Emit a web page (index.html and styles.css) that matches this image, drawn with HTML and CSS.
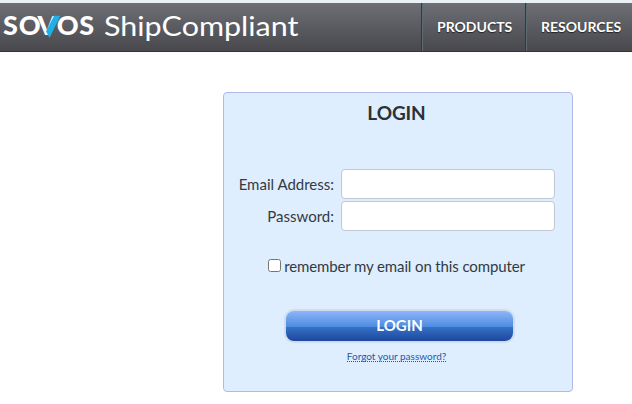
FILE: index.html
```html
<!DOCTYPE html>
<html lang="en">
<head>
    <meta charset="UTF-8">
    <meta name="viewport" content="width=device-width, initial-scale=1.0">
    <title>Sovos ShipCompliant Login</title>
    <link rel="stylesheet" href="styles.css">
</head>
<body>
    <header class="header">
        <a class="logo" href="#">
            <svg width="300" height="48" viewBox="0 0 300 48">
                <text class="logo-sovos" x="3 18.8 37.6 56.8 79.2" y="32.4">SOVOS</text>
                <polygon points="54,12.8 60.3,12.8 49.6,34.8 46,28.5" fill="#1fb0e6"/>
                <text class="logo-ship" x="104" y="32.6" textLength="194.5" lengthAdjust="spacingAndGlyphs">ShipCompliant</text>
            </svg>
        </a>
        <nav class="nav">
            <a class="products" href="#">PRODUCTS</a>
            <a class="resources" href="#">RESOURCES</a>
        </nav>
    </header>

    <form class="login-box">
        <h1>LOGIN</h1>
        <div class="row">
            <label for="email">Email Address:</label>
            <input type="text" id="email">
        </div>
        <div class="row">
            <label for="password">Password:</label>
            <input type="password" id="password">
        </div>
        <div class="remember">
            <input type="checkbox" id="remember">
            <label for="remember">remember my email on this computer</label>
        </div>
        <button class="login-btn" type="button">LOGIN</button>
        <a class="forgot" href="#">Forgot your password?</a>
    </form>
</body>
</html>
```

FILE: styles.css
```css
* {
    box-sizing: border-box;
}

body {
    margin: 0;
    background: #fff;
    font-family: Lato, sans-serif;
    font-size: 15px;
    color: #333a42;
    overflow: hidden;
}

/* Header */
.header {
    display: flex;
    height: 52px;
    border-top: 3px solid #eaf1f5;
    border-bottom: 1px solid #35353a;
    background: linear-gradient(#6d6f74, #48484d);
}

.logo {
    width: 421px;
}

.logo svg {
    display: block;
}

.logo text {
    fill: #fff;
}

.logo-sovos {
    font-family: Lato, sans-serif;
    font-size: 27px;
    font-weight: 900;
}

.logo-ship {
    font-family: Lato, sans-serif;
    font-size: 27px;
}

.nav {
    display: flex;
}

.nav a {
    border-left: 1px solid #2b3b40;
    box-shadow: inset 1px 0 #5d6c70;
    padding-left: 15px;
    color: #fff;
    font-size: 14px;
    font-weight: bold;
    line-height: 48px;
    text-decoration: none;
    text-shadow: 0 1px 1px #222;
}

.products {
    width: 104px;
}

.resources {
    width: 107px;
}

/* Login panel */
.login-box {
    display: flex;
    flex-direction: column;
    align-items: center;
    width: 350px;
    height: 300px;
    margin: 40px 0 0 223px;
    border: 1px solid #b1b9e8;
    border-radius: 4px;
    background: #deeeff;
}

.login-box h1 {
    margin: 8px 3px 44px 0;
    font-size: 19px;
    line-height: 24px;
    letter-spacing: -0.1px;
    color: #2d3136;
}

.row {
    display: flex;
    align-items: center;
    justify-content: flex-end;
    width: 100%;
    height: 30px;
    margin-bottom: 2px;
    padding-right: 17px;
}

.row input {
    width: 214px;
    height: 30px;
    margin: 0 0 0 7px;
    padding: 4px 8px;
    border: 1px solid #c1c7d0;
    border-radius: 4px;
    background: #fff;
}

.remember {
    display: flex;
    align-items: center;
    height: 20px;
    margin: 23px 3px 0 0;
    letter-spacing: -0.12px;
}

.remember input {
    width: 13px;
    height: 13px;
    margin: 0 3px 2px 0;
}

/* Button */
.login-btn {
    width: 227px;
    height: 30px;
    margin: 35px 0 0 3px;
    padding: 0 0 2px;
    border: 0;
    border-radius: 8px;
    background: linear-gradient(#8fb4fa, #4c8de0 52%, #3473c8 53%, #1f469c);
    box-shadow: 0 0 1px 2px #cfdaee;
    color: #fff;
    font-family: Lato, sans-serif;
    font-size: 15px;
    font-weight: bold;
}

.forgot {
    margin: 10px 3px 0 0;
    border-bottom: 1px dotted #2458a8;
    color: #1f58aa;
    font-size: 10px;
    line-height: 10px;
    text-decoration: none;
}
```
